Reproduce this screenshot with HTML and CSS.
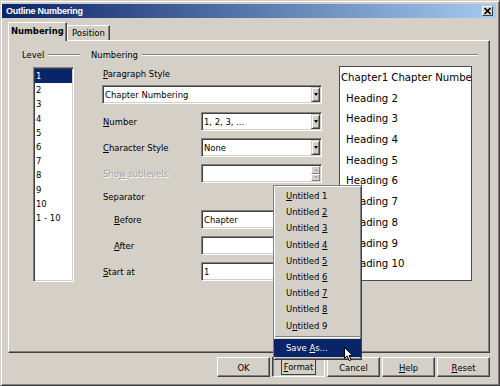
FILE: index.html
```html
<!DOCTYPE html>
<html>
<head>
<meta charset="utf-8">
<title>Outline Numbering</title>
<link rel="stylesheet" href="styles.css">
</head>
<body>
<div class="window">
  <div class="titlebar">
    <span class="title">Outline Numbering</span>
    <span class="close"><svg width="9" height="8" viewBox="0 0 9 8"><path d="M1.5 1 L7.5 7 M7.5 1 L1.5 7" stroke="#000" stroke-width="1.6" fill="none"/></svg></span>
  </div>
  <div class="tabs">
    <div class="tab active">Numbering</div>
    <div class="tab">Position</div>
  </div>
  <div class="panel">
    <div class="group level-group">
      <div class="legend"><span>Level</span><span class="rule"></span></div>
      <div class="listbox">
        <div class="item selected">1</div>
        <div class="item">2</div>
        <div class="item">3</div>
        <div class="item">4</div>
        <div class="item">5</div>
        <div class="item">6</div>
        <div class="item">7</div>
        <div class="item">8</div>
        <div class="item">9</div>
        <div class="item">10</div>
        <div class="item">1 - 10</div>
      </div>
    </div>
    <div class="group num-group">
      <div class="legend"><span>Numbering</span><span class="rule"></span></div>
      <div class="num-body">
        <div class="form">
          <div class="label para"><u>P</u>aragraph Style</div>
          <div class="combo wide"><span class="val">Chapter Numbering</span><span class="drop"><i></i></span></div>
          <div class="row first">
            <div class="label"><u>N</u>umber</div>
            <div class="combo field"><span class="val">1, 2, 3, ...</span><span class="drop"><i></i></span></div>
          </div>
          <div class="row">
            <div class="label"><u>C</u>haracter Style</div>
            <div class="combo field"><span class="val">None</span><span class="drop"><i></i></span></div>
          </div>
          <div class="row">
            <div class="label disabled">Sho<u>w</u> sublevels</div>
            <div class="combo field"><span class="val"></span><span class="spin"><b><i class="up"></i></b><b><i class="down"></i></b></span></div>
          </div>
          <div class="label sep">Separator</div>
          <div class="row before">
            <div class="label indent"><u>B</u>efore</div>
            <div class="combo field"><span class="val">Chapter</span></div>
          </div>
          <div class="row">
            <div class="label indent"><u>A</u>fter</div>
            <div class="combo field"><span class="val"></span></div>
          </div>
          <div class="row">
            <div class="label"><u>S</u>tart at</div>
            <div class="combo field"><span class="val">1</span></div>
          </div>
        </div>
        <div class="preview">
          <div class="pline first">Chapter1 Chapter Numbering</div>
          <div class="pline">Heading 2</div>
          <div class="pline">Heading 3</div>
          <div class="pline">Heading 4</div>
          <div class="pline">Heading 5</div>
          <div class="pline">Heading 6</div>
          <div class="pline">Heading 7</div>
          <div class="pline">Heading 8</div>
          <div class="pline">Heading 9</div>
          <div class="pline">Heading 10</div>
        </div>
      </div>
    </div>
  </div>
  <div class="buttons">
    <div class="button">OK</div>
    <div class="button pressed"><span class="focus"><u>F</u>ormat</span></div>
    <div class="button">Cancel</div>
    <div class="button"><u>H</u>elp</div>
    <div class="button"><u>R</u>eset</div>
  </div>
</div>
<div class="menu">
  <div class="mitem"><u>U</u>ntitled 1</div>
  <div class="mitem">Untitled <u>2</u></div>
  <div class="mitem">Untitled <u>3</u></div>
  <div class="mitem">Untitled <u>4</u></div>
  <div class="mitem">Untitled <u>5</u></div>
  <div class="mitem">Untitled <u>6</u></div>
  <div class="mitem">Untitled <u>7</u></div>
  <div class="mitem">Untitled <u>8</u></div>
  <div class="mitem">U<u>n</u>titled 9</div>
  <div class="msep"></div>
  <div class="mitem hl">Save <u>A</u>s...</div>
</div>
<svg class="cursor" width="11" height="15" viewBox="0 0 11 15"><path d="M0.5 0.5 L0.5 11.5 L3.2 9 L5.2 13.6 L7 12.8 L5.1 8.4 L8.6 8.4 Z" fill="#fff" stroke="#000" stroke-width="1" stroke-linejoin="miter"/></svg>
</body>
</html>
```
FILE: styles.css
```css
* { box-sizing: border-box; }
body {
  margin: 0;
  width: 500px;
  height: 386px;
  overflow: hidden;
  background: #d4d0c8;
  font-family: "DejaVu Sans Condensed", "DejaVu Sans", sans-serif;
  font-stretch: condensed;
  font-size: 9.4px;
  color: #000;
}
u { text-decoration: underline; text-underline-offset: 1px; }

.window {
  width: 500px;
  height: 386px;
  border: 1px solid;
  border-color: #d4d0c8 #404040 #404040 #d4d0c8;
  box-shadow: inset 1px 1px 0 #fff, inset -1px -1px 0 #808080;
  padding: 3px 3px 0 1px;
}
.titlebar {
  height: 14px;
  background: linear-gradient(to right, #0a246a, #a6caf0);
  display: flex;
  align-items: center;
  justify-content: space-between;
  padding: 0 3px 0 4px;
}
.title {
  color: #fff;
  font-family: "Liberation Sans", Arial, sans-serif;
  font-stretch: normal;
  font-weight: bold;
  font-size: 9px;
  letter-spacing: -0.25px;
}
.close {
  width: 11px;
  height: 10px;
  background: #d4d0c8;
  border: 1px solid;
  border-color: #fff #404040 #404040 #fff;
  display: flex;
  align-items: center;
  justify-content: center;
}

.tabs {
  display: flex;
  align-items: flex-end;
  margin-top: 4px;
  padding-left: 6px;
  height: 18px;
}
.tab {
  height: 15px;
  width: 43px;
  border: 1px solid;
  border-bottom: none;
  border-color: #fff #404040 transparent #fff;
  box-shadow: inset -1px 0 0 #808080;
  padding-left: 4px;
  line-height: 13px;
}
.tab.active {
  position: relative;
  z-index: 1;
  width: 59px;
  height: 19px;
  margin-bottom: -1px;
  background: #d4d0c8;
  font-weight: bold;
  padding-left: 2px;
  line-height: 16px;
}

.panel {
  margin-left: 6px;
  width: 482px;
  height: 313px;
  border: 1px solid;
  border-color: #fff #404040 #404040 #fff;
  box-shadow: inset -1px -1px 0 #808080;
  display: flex;
  padding-top: 8px;
}
.legend {
  height: 12px;
  line-height: 12px;
  display: flex;
  align-items: center;
  gap: 4px;
}
.rule {
  flex: 1;
  height: 2px;
  border-top: 1px solid #808080;
  border-bottom: 1px solid #fff;
}
.level-group { margin-left: 13px; width: 58px; }
.num-group { margin-left: 11px; width: 387px; }

.listbox {
  margin: 6px 0 0 11px;
  width: 41px;
  height: 215px;
  background: #fff;
  border: 1px solid;
  border-color: #808080 #fff #fff #808080;
  box-shadow: inset 1px 1px 0 #404040, inset -1px -1px 0 #d4d0c8;
  padding: 1px;
}
.item {
  height: 14.2px;
  line-height: 14.2px;
  padding-left: 1px;
}
.item.selected { background: #0a246a; color: #fff; }

.num-body { display: flex; padding-left: 11px; }
.form { width: 220px; margin-top: 6px; }
.label { height: 14px; line-height: 14px; padding-left: 1px; white-space: nowrap; }
.label.disabled { color: #a0a0a0; text-shadow: 1px 1px 0 #fff; }
.label.indent { padding-left: 12px; }
.combo {
  height: 19px;
  background: #fff;
  border: 1px solid;
  border-color: #808080 #fff #fff #808080;
  box-shadow: inset 1px 1px 0 #404040, inset -1px -1px 0 #d4d0c8;
  display: flex;
  align-items: center;
  padding: 1px 1px 1px 2px;
}
.combo .val { flex: 1; white-space: nowrap; overflow: hidden; }
.combo.wide { margin-top: 4px; }
.row { display: flex; align-items: center; height: 19px; margin-top: 7px; }
.row.first { margin-top: 8px; }
.row.before { margin-top: 6px; }
.row .label { width: 99px; }
.row .field { width: 121px; }
.label.sep { margin-top: 7px; }

.drop {
  width: 9px;
  height: 15px;
  background: #d4d0c8;
  border: 1px solid;
  border-color: #d4d0c8 #404040 #404040 #d4d0c8;
  box-shadow: inset 1px 1px 0 #fff, inset -1px -1px 0 #808080;
  display: flex;
  align-items: center;
  justify-content: center;
}
.drop i {
  width: 0; height: 0;
  border-left: 2.5px solid transparent;
  border-right: 2.5px solid transparent;
  border-top: 3px solid #000;
}
.spin { display: flex; flex-direction: column; width: 9px; height: 15px; }
.spin b {
  flex: 1;
  background: #d4d0c8;
  border: 1px solid;
  border-color: #fff #808080 #808080 #fff;
  display: flex;
  align-items: center;
  justify-content: center;
}
.spin i { width: 0; height: 0; border-left: 2px solid transparent; border-right: 2px solid transparent; }
.spin i.up { border-bottom: 2px solid #a0a0a0; }
.spin i.down { border-top: 2px solid #a0a0a0; }

.preview {
  margin: 5px 0 0 17px;
  width: 133px;
  height: 215px;
  background: #fff;
  border: 1px solid #4a4a4a;
  overflow: hidden;
  padding: 1px 0 0 1px;
  font-size: 11.3px;
}
.pline { height: 20.7px; line-height: 20.7px; white-space: nowrap; padding-left: 5px; }
.pline.first { padding-left: 0; }

.buttons {
  display: flex;
  justify-content: flex-end;
  gap: 2px;
  margin-top: 4px;
  padding-right: 6px;
}
.button {
  width: 53px;
  height: 20px;
  border: 1px solid;
  border-color: #fff #404040 #404040 #fff;
  box-shadow: inset -1px -1px 0 #808080;
  display: flex;
  align-items: center;
  justify-content: center;
}
.button.pressed {
  border-color: #404040 #fff #fff #404040;
  box-shadow: inset 1px 1px 0 #808080;
}
.focus { border: 1px solid #404040; padding: 1px 2px; line-height: 12px; }

.menu {
  position: absolute;
  left: 273px;
  top: 185px;
  width: 89px;
  height: 175px;
  background: #d4d0c8;
  border: 1px solid;
  border-color: #808080 #404040 #404040 #808080;
  box-shadow: inset 1px 1px 0 #fff, inset -1px -1px 0 #808080;
  padding: 2px 0;
}
.mitem { height: 16.2px; line-height: 16.2px; padding-left: 12px; white-space: nowrap; }
.msep { height: 2px; margin: 2px 1px 1px; border-top: 1px solid #808080; border-bottom: 1px solid #fff; }
.mitem.hl { height: 18px; line-height: 18px; background: #0a246a; color: #fff; }
.cursor { position: absolute; left: 344px; top: 347px; }
```
